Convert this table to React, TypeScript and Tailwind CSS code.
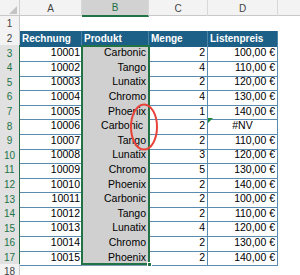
const rows: [number, string, number, string][] = [
  [10001, "Carbonic", 2, "100,00 €"],
  [10002, "Tango", 4, "110,00 €"],
  [10003, "Lunatix", 2, "120,00 €"],
  [10004, "Chromo", 4, "130,00 €"],
  [10005, "Phoenix", 1, "140,00 €"],
  [10006, "Carbonic ", 2, "#NV"],
  [10007, "Tango", 2, "110,00 €"],
  [10008, "Lunatix", 3, "120,00 €"],
  [10009, "Chromo", 5, "130,00 €"],
  [10010, "Phoenix", 2, "140,00 €"],
  [10011, "Carbonic", 2, "100,00 €"],
  [10012, "Tango", 2, "110,00 €"],
  [10013, "Lunatix", 4, "120,00 €"],
  [10014, "Chromo", 2, "130,00 €"],
  [10015, "Phoenix", 2, "140,00 €"],
];

const grid = "grid grid-cols-[20px_62px_67px_59px_70px_1fr]";

const RowHead = ({ n, selected }: { n: number; selected?: boolean }) => (
  <div
    className={`flex items-center justify-center border-b border-r text-[10px] ${
      selected
        ? "bg-[#e1e1e1] text-[#217346] border-b-[#d0d0d0] border-r-[#217346]"
        : "bg-[#f3f3f3] text-[#444] border-b-[#d8d8d8] border-r-[#c8c8c8]"
    }`}
  >
    {n}
  </div>
);

export default function App() {
  return (
    <div className="relative w-[300px] h-[275px] overflow-hidden bg-white font-['Liberation_Sans',sans-serif] text-[10.5px] text-black">
      {/* column letters */}
      <div className={`${grid} h-[16px] bg-[#f3f3f3] text-[#444] text-[10px] border-b border-[#c8c8c8]`}>
        <div className="relative border-r border-[#d0d0d0]">
          <div className="absolute right-[2px] bottom-[2px] w-0 h-0 border-l-[8px] border-l-transparent border-b-[8px] border-b-[#c4c4c4]" />
        </div>
        <div className="flex items-center justify-center border-r border-[#d8d8d8]">A</div>
        <div className="flex items-center justify-center border-r border-[#d8d8d8] bg-[#d2d2d2] text-[#217346] border-b-2 border-b-[#217346] -mb-px">B</div>
        <div className="flex items-center justify-center border-r border-[#d8d8d8]">C</div>
        <div className="flex items-center justify-center border-r border-[#d8d8d8]">D</div>
        <div />
      </div>

      {/* row 1 */}
      <div className={`${grid} h-[14.6px]`}>
        <RowHead n={1} />
        <div className="col-span-5" />
      </div>

      {/* row 2: table header */}
      <div className={`${grid} h-[14.6px]`}>
        <RowHead n={2} />
        {["Rechnung", "Produkt", "Menge", "Listenpreis"].map((h) => (
          <div
            key={h}
            className="flex items-center px-[2px] bg-[#1c5f87] text-white text-[10px] font-bold border-r border-[#4c84a8]"
          >
            {h}
          </div>
        ))}
        <div />
      </div>

      {rows.map(([nr, prod, qty, price], i) => (
        <div key={nr} className={`${grid} h-[14.6px]`}>
          <RowHead n={i + 3} selected />
          <div className="flex items-center justify-end px-[2px] border-b border-[#5a8bb0]">{nr}</div>
          <div className="flex items-center justify-end px-[3px] bg-[#d0d0d0] border-b border-[#7f9db4] whitespace-pre">
            {prod}
          </div>
          <div className="flex items-center justify-end px-[2px] border-b border-r border-[#5a8bb0]">{qty}</div>
          <div
            className={`relative flex items-center px-[2px] border-b border-r border-[#5a8bb0] ${
              price === "#NV" ? "justify-center" : "justify-end"
            }`}
          >
            {price === "#NV" && (
              <div className="absolute left-0 top-0 w-0 h-0 border-t-[5px] border-t-[#1e8a3a] border-r-[5px] border-r-transparent" />
            )}
            {price}
          </div>
          <div />
        </div>
      ))}

      {/* row 18 */}
      <div className={`${grid} h-[14.6px]`}>
        <RowHead n={18} />
        <div className="col-span-5" />
      </div>

      {/* selection B3:B17 */}
      <div className="absolute left-[81px] top-[45px] w-[69px] h-[220px] border-2 border-[#217346] pointer-events-none">
        <div className="absolute -right-[4px] -bottom-[4px] w-[5px] h-[5px] bg-[#217346] border border-white" />
      </div>

      {/* red marker ellipse */}
      <svg className="absolute left-[126px] top-[100px]" width="36" height="54" viewBox="0 0 36 54">
        <ellipse cx="18" cy="27" rx="13" ry="22.5" fill="none" stroke="#e8423a" strokeWidth="2" />
      </svg>
    </div>
  );
}
